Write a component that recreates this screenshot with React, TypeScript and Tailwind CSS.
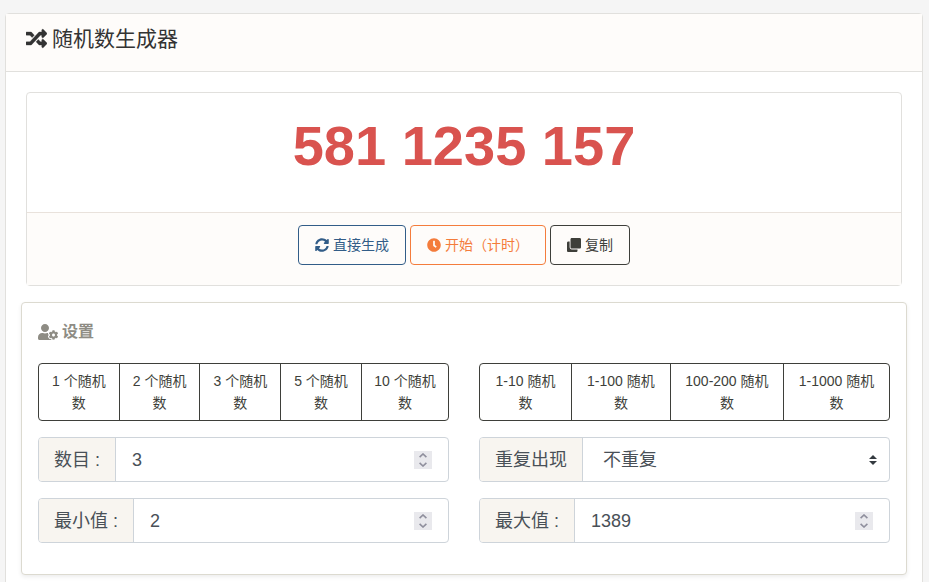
import { useId, useState } from "react";
import { FaClock, FaClone, FaRandom, FaSyncAlt, FaUserCog } from "react-icons/fa";

const countPresets = [1, 2, 3, 5, 10];
const rangePresets: [number, number][] = [
  [1, 10],
  [1, 100],
  [100, 200],
  [1, 1000],
];

const groupClass =
  "flex h-[45px] overflow-hidden rounded border border-[#ced4da] bg-white text-lg text-[#495057]";
const addonClass =
  "flex shrink-0 items-center whitespace-pre border-r border-[#ced4da] bg-[#f8f5f0] px-[15px]";

function NumberField({
  label,
  value,
  onChange,
}: {
  label: string;
  value: number;
  onChange: (n: number) => void;
}) {
  const id = useId();
  return (
    <div className={groupClass}>
      <label htmlFor={id} className={addonClass}>
        {label}
      </label>
      <input
        id={id}
        type="number"
        value={value}
        onChange={(e) => onChange(Number(e.target.value))}
        className="min-w-0 flex-1 bg-transparent pl-4 outline-none [appearance:textfield] [&::-webkit-inner-spin-button]:appearance-none"
      />
      <div className="mr-4 flex h-[18px] w-[18px] shrink-0 flex-col self-center bg-[#e9e9ed] text-[#8f8f9d]">
        <button
          type="button"
          aria-label="+1"
          onClick={() => onChange(value + 1)}
          className="flex h-[9px] items-center justify-center"
        >
          <svg width="8" height="5" viewBox="0 0 8 5" fill="none" stroke="currentColor" strokeWidth="1.6">
            <path d="M0.6 4.2L4 1l3.4 3.2" />
          </svg>
        </button>
        <button
          type="button"
          aria-label="-1"
          onClick={() => onChange(value - 1)}
          className="flex h-[9px] items-center justify-center"
        >
          <svg width="8" height="5" viewBox="0 0 8 5" fill="none" stroke="currentColor" strokeWidth="1.6">
            <path d="M0.6 0.8L4 4l3.4-3.2" />
          </svg>
        </button>
      </div>
    </div>
  );
}

function PresetGroup({ items }: { items: { label: string; apply: () => void }[] }) {
  return (
    <div className="flex">
      {items.map((item) => (
        <button
          key={item.label}
          type="button"
          onClick={item.apply}
          className="-ml-px flex-auto border border-[#3e3f3a] px-3 py-[6px] text-sm leading-[22px] text-[#3e3f3a] first:ml-0 first:rounded-l last:rounded-r"
        >
          {item.label}
        </button>
      ))}
    </div>
  );
}

export default function App() {
  const [count, setCount] = useState(3);
  const [min, setMin] = useState(2);
  const [max, setMax] = useState(1389);
  const [unique, setUnique] = useState("unique");
  const [result, setResult] = useState([581, 1235, 157]);

  const generate = () =>
    setResult(Array.from({ length: count }, () => min + Math.floor(Math.random() * (max - min + 1))));

  const actionClass = "flex h-10 items-center gap-1 rounded border px-4 text-sm";

  return (
    <div
      lang="zh-CN"
      className="min-h-screen bg-[#f5f5f5] px-[5px] pt-[13px] font-['Liberation_Sans','Noto_Sans_CJK_SC',sans-serif] text-[#3e3f3a]"
    >
      <main className="mr-px rounded border border-[#e1e0dd] bg-white">
        <header className="border-b border-[#e1e0dd] bg-[#fefcfa] px-5 pt-3 pb-5">
          <h1 className="flex items-center gap-[5px] text-[21px] leading-[25px] text-[#333]">
            <FaRandom size={21} strokeWidth={8} />
            随机数生成器
          </h1>
        </header>

        <div className="px-[15px] py-5">
          <section className="mx-[5px] rounded border border-[#e1e0dd]">
            <p className="px-5 pt-5 pb-[34px] text-center text-[56px] leading-[65px] font-bold text-[#d9534f]">
              {result.join(" ")}
            </p>
            <div className="flex justify-center gap-1 border-t border-[#e9e2dc] bg-[#fefcfa] pt-3 pb-5">
              <button type="button" onClick={generate} className={`${actionClass} border-[#325d88] text-[#325d88]`}>
                <FaSyncAlt size={14} />
                直接生成
              </button>
              <button type="button" onClick={generate} className={`${actionClass} border-[#f47c3c] text-[#f47c3c]`}>
                <FaClock size={14} />
                开始（计时）
              </button>
              <button
                type="button"
                onClick={() => navigator.clipboard?.writeText(result.join(" "))}
                className={`${actionClass} border-[#3e3f3a] text-[#3e3f3a]`}
              >
                <FaClone size={14} />
                复制
              </button>
            </div>
          </section>

          <section className="mt-4 rounded border border-[#dcdad0] bg-white p-4 pb-[31px] shadow-[0_2px_4px_rgba(0,0,0,0.075)]">
            <h2 className="mb-[18px] flex items-center gap-1 text-base leading-[26px] font-bold text-[#8e8c84]">
              <FaUserCog size={20} />
              设置
            </h2>
            <div className="grid grid-cols-2 gap-x-[30px] gap-y-4">
              <PresetGroup
                items={countPresets.map((n) => ({ label: `${n} 个随机数`, apply: () => setCount(n) }))}
              />
              <PresetGroup
                items={rangePresets.map(([a, b]) => ({
                  label: `${a}-${b} 随机数`,
                  apply: () => {
                    setMin(a);
                    setMax(b);
                  },
                }))}
              />
              <NumberField label="数目 :" value={count} onChange={setCount} />
              <div className={groupClass}>
                <label htmlFor="repeat" className={addonClass}>
                  重复出现
                </label>
                <div className="flex min-w-0 flex-1 items-center pr-3">
                  <select
                    id="repeat"
                    value={unique}
                    onChange={(e) => setUnique(e.target.value)}
                    className="h-full min-w-0 flex-1 appearance-none bg-transparent pl-5 outline-none"
                  >
                    <option value="unique">不重复</option>
                    <option value="repeat">可重复</option>
                  </select>
                  <svg width="8" height="10" viewBox="0 0 4 5" fill="#343a40" aria-hidden="true">
                    <path d="M2 0L0 2h4zm0 5L0 3h4z" />
                  </svg>
                </div>
              </div>
              <NumberField label="最小值 :" value={min} onChange={setMin} />
              <NumberField label="最大值 :" value={max} onChange={setMax} />
            </div>
          </section>
        </div>
      </main>
    </div>
  );
}
